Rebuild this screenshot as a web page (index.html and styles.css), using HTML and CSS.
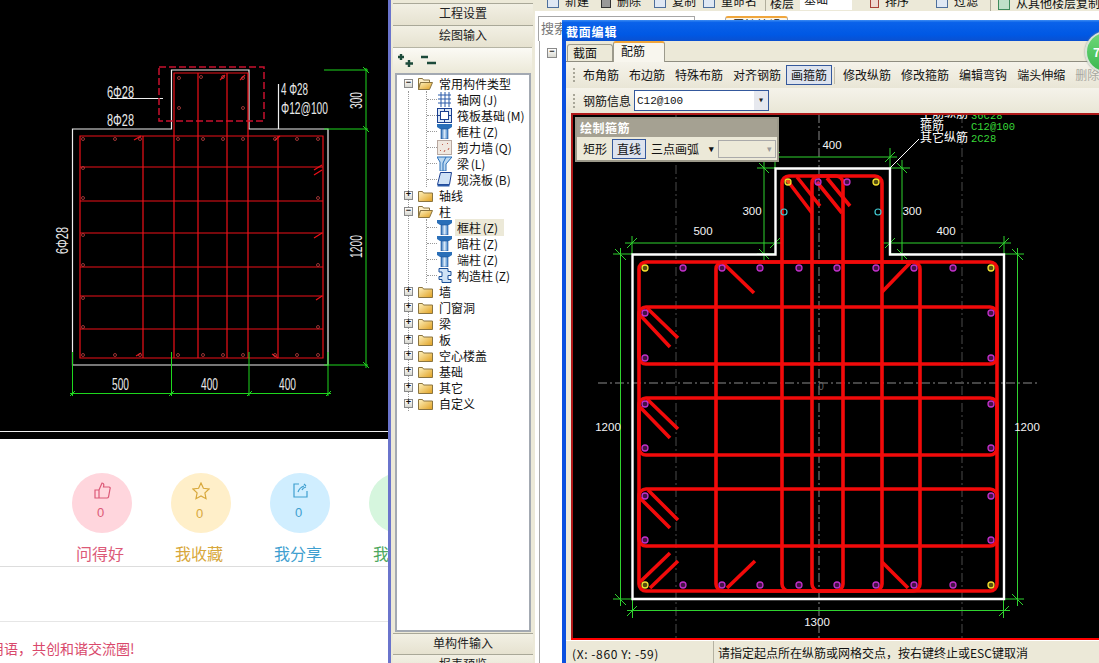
FILE: index.html
```html
<!DOCTYPE html>
<html lang="zh">
<head>
<meta charset="utf-8">
<title>截面编辑</title>
<link rel="stylesheet" href="styles.css">
</head>
<body>
<svg class="defs" width="0" height="0">
  <defs>
    <linearGradient id="fold" x1="0" y1="0" x2="1" y2="1"><stop offset="0" stop-color="#fff3c0"/><stop offset="1" stop-color="#e0a020"/></linearGradient>
    <linearGradient id="col" x1="0" y1="0" x2="1" y2="0"><stop offset="0" stop-color="#2a6fb8"/><stop offset=".5" stop-color="#d8e8f8"/><stop offset="1" stop-color="#3a80c8"/></linearGradient>
    <symbol id="i-closed" viewBox="0 0 15 13"><path d="M.5 2.500h4l1 1.500h9v8.500h-14z" fill="url(#fold)" stroke="#8a7440"/></symbol>
    <symbol id="i-open" viewBox="0 0 15 13"><path d="M.5 1.500h4l1 1.500h6v2.500h-9l-2 7z" fill="#fff0c8" stroke="#8a7440"/><path d="M2.500 5.500h12l-3 7h-11z" fill="url(#fold)" stroke="#8a7440"/></symbol>
    <symbol id="i-grid" viewBox="0 0 15 15"><path d="M1 3h13M1 7h13M1 11h13M4 0v15M8 0v15M12 0v15" stroke="#2a5aa8" fill="none"/></symbol>
    <symbol id="i-raft" viewBox="0 0 15 15"><rect x=".5" y=".5" width="14" height="14" fill="#dbe8f8" stroke="#1a3f90"/><rect x="3.500" y="3.500" width="8" height="8" fill="#fff" stroke="#1a3f90"/><path d="M0 7.500h3M12 7.500h3M7.500 0v3M7.500 12v3" stroke="#1a3f90"/></symbol>
    <symbol id="i-col" viewBox="0 0 15 15"><path d="M0 0h15v3l-3 2h-9l-3-2z" fill="#2a6fb8"/><rect x="4" y="5" width="7" height="10" fill="url(#col)" stroke="#1a4f98" stroke-width=".6"/></symbol>
    <symbol id="i-wall" viewBox="0 0 15 15"><rect x=".5" y=".5" width="14" height="14" fill="#f0e8e0" stroke="#b8a8a0"/><path d="M3 11l1-1M7 12l1-2M11 10l1-2M5 5l1-1M10 4l1-1" stroke="#c06050"/></symbol>
    <symbol id="i-beam" viewBox="0 0 15 15"><path d="M0 1h15L9 8v7H3V6z" fill="#bcd8f0" stroke="#2a6fb8"/><path d="M9 1L6 7v8" stroke="#2a6fb8" fill="none"/></symbol>
    <symbol id="i-slab" viewBox="0 0 15 15"><path d="M3.500 .5h11l-2 12h-12z" fill="#cfe2f6" stroke="#1a3f90"/><path d="M.5 12.500h12v2h-12z" fill="#2a5aa8"/></symbol>
    <symbol id="i-struct" viewBox="0 0 15 15"><path d="M5 .5h6v3h3v4h-3v4h3v3H5v-3H2v-3h3V4H2V.5z" fill="#cfe2f6" stroke="#1a4f98"/></symbol>
  </defs>
</svg>

<div class="page">
  <section class="left">
    <svg class="cad" viewBox="0 0 388 439" width="388" height="439">
      <rect class="cad-bg" x="0" y="0" width="388" height="439"/>
      <g class="cad-white">
        <path d="M72.500 365V129H171.500V70H249V129H328V365Z"/>
        <path d="M110 98.500H163M278.500 84V129"/>
        <path d="M0 431.500H388"/>
      </g>
      <rect class="cad-dash" x="159" y="67" width="105" height="54"/>
      <g class="cad-red">
        <path d="M80 136H323V358H80ZM174 73H248V358H174Z"/>
        <path d="M198 73V358M227 73V358M143 136V358M278 136V358"/>
        <path d="M80 167H323M80 201H323M80 233H323M80 267H323M80 296H323M80 329H323"/>
        <path d="M134 140L141 136M275 140L280 136M220 80L225 75M240 80L245 75M314 170L322 165M314 175L322 170M314 238L322 233M316 300L322 296M136 356L141 353M272 354L278 358"/>
      </g>
      <g class="cad-dots">
        <circle cx="83" cy="139" r="1.500"/><circle cx="115" cy="139" r="1.500"/><circle cx="140" cy="139" r="1.500"/><circle cx="178" cy="139" r="1.500"/><circle cx="203" cy="139" r="1.500"/><circle cx="223" cy="139" r="1.500"/><circle cx="243" cy="139" r="1.500"/><circle cx="275" cy="139" r="1.500"/><circle cx="297" cy="139" r="1.500"/><circle cx="318" cy="139" r="1.500"/>
        <circle cx="83" cy="355" r="1.500"/><circle cx="115" cy="355" r="1.500"/><circle cx="140" cy="355" r="1.500"/><circle cx="178" cy="355" r="1.500"/><circle cx="203" cy="355" r="1.500"/><circle cx="223" cy="355" r="1.500"/><circle cx="243" cy="355" r="1.500"/><circle cx="275" cy="355" r="1.500"/><circle cx="297" cy="355" r="1.500"/><circle cx="318" cy="355" r="1.500"/>
        <circle cx="83" cy="168" r="1.500"/><circle cx="83" cy="198" r="1.500"/><circle cx="83" cy="235" r="1.500"/><circle cx="83" cy="265" r="1.500"/><circle cx="83" cy="298" r="1.500"/><circle cx="83" cy="327" r="1.500"/>
        <circle cx="318" cy="198" r="1.500"/><circle cx="318" cy="265" r="1.500"/><circle cx="318" cy="327" r="1.500"/>
        <circle cx="179" cy="78" r="1.500"/><circle cx="201" cy="77" r="1.500"/><circle cx="223" cy="77" r="1.500"/><circle cx="243" cy="78" r="1.500"/><circle cx="179" cy="108" r="1.500"/><circle cx="243" cy="108" r="1.500"/>
      </g>
      <g class="cad-green">
        <path d="M72.500 352V396M171.500 352V396M249 352V396M328 352V396M70 393.500H331"/>
        <path d="M70 396L75 391M169 396L174 391M247 396L252 391M326 396L331 391"/>
        <path d="M366 68V368M324 70H368M324 129H368M324 365H368"/>
        <path d="M363 67L369 73M363 126L369 132M363 362L369 368"/>
      </g>
      <g class="cad-text">
        <text x="107" y="98" textLength="27" lengthAdjust="spacingAndGlyphs">6Φ28</text>
        <text x="107" y="126" textLength="27" lengthAdjust="spacingAndGlyphs">8Φ28</text>
        <text x="281" y="95" textLength="27" lengthAdjust="spacingAndGlyphs">4 Φ28</text>
        <text x="281" y="114" textLength="47" lengthAdjust="spacingAndGlyphs">Φ12@100</text>
        <text x="112" y="390" textLength="17" lengthAdjust="spacingAndGlyphs">500</text>
        <text x="201" y="390" textLength="17" lengthAdjust="spacingAndGlyphs">400</text>
        <text x="279" y="390" textLength="17" lengthAdjust="spacingAndGlyphs">400</text>
        <text transform="translate(362 109) rotate(-90)" textLength="17" lengthAdjust="spacingAndGlyphs">300</text>
        <text transform="translate(362 258) rotate(-90)" textLength="23" lengthAdjust="spacingAndGlyphs">1200</text>
        <text transform="translate(68 254) rotate(-90)" textLength="27" lengthAdjust="spacingAndGlyphs">6Φ28</text>
      </g>
    </svg>

    <div class="actions">
      <div class="action pink">
        <div class="bubble">
          <svg width="17" height="17" viewBox="0 0 17 17"><path d="M1 8h4v8H1zM5 8l3-7c2 0 2 2 1.500 4H15c1 0 1.500 1 1 2l-1.500 8c-.2.700-.7 1-1.500 1H5"/></svg>
          <span class="count">0</span>
        </div>
        <span class="label">问得好</span>
      </div>
      <div class="action amber">
        <div class="bubble">
          <svg width="18" height="18" viewBox="0 0 18 18"><path d="M9 1l2.400 5.300 5.600.7-4.100 3.900 1.100 5.800L9 14l-5 2.700 1.100-5.800L1 7l5.600-.7z"/></svg>
          <span class="count">0</span>
        </div>
        <span class="label">我收藏</span>
      </div>
      <div class="action sky">
        <div class="bubble">
          <svg width="17" height="17" viewBox="0 0 17 17"><path d="M7 2H2v13h13V9M6 10c1-3 3-5 6-6M10 8c.5-1.500 2-2.500 4-3M12 2l2 2"/></svg>
          <span class="count">0</span>
        </div>
        <span class="label">我分享</span>
      </div>
      <div class="action mint">
        <div class="bubble"></div>
        <span class="label">我参与</span>
      </div>
    </div>
    <div class="spacer"></div>
    <p class="notice">用语，共创和谐交流圈!</p>
  </section>

  <div class="edge"></div>

  <aside class="sidebar">
    <div class="nav-btn">工程设置</div>
    <div class="nav-btn">绘图输入</div>
    <div class="tree-tools">
      <svg width="18" height="16" viewBox="0 0 18 16"><path class="plus" d="M3 1v6M0 4h6M11 7v7M7.500 10.500H15"/></svg>
      <svg width="18" height="16" viewBox="0 0 18 16"><path class="plus" d="M0 4h7M6 10h9"/></svg>
    </div>
    <div class="tree">
      <div class="row"><i class="tw">−</i><svg class="fold"><use href="#i-open"/></svg><span>常用构件类型</span></div>
      <div class="children">
        <div class="row leaf"><svg class="ico"><use href="#i-grid"/></svg><span>轴网 (J)</span></div>
        <div class="row leaf"><svg class="ico"><use href="#i-raft"/></svg><span>筏板基础 (M)</span></div>
        <div class="row leaf"><svg class="ico"><use href="#i-col"/></svg><span>框柱 (Z)</span></div>
        <div class="row leaf"><svg class="ico"><use href="#i-wall"/></svg><span>剪力墙 (Q)</span></div>
        <div class="row leaf"><svg class="ico"><use href="#i-beam"/></svg><span>梁 (L)</span></div>
        <div class="row leaf"><svg class="ico"><use href="#i-slab"/></svg><span>现浇板 (B)</span></div>
      </div>
      <div class="row"><i class="tw">+</i><svg class="fold"><use href="#i-closed"/></svg><span>轴线</span></div>
      <div class="row"><i class="tw">−</i><svg class="fold"><use href="#i-open"/></svg><span>柱</span></div>
      <div class="children">
        <div class="row leaf"><svg class="ico"><use href="#i-col"/></svg><span class="current">框柱 (Z)</span></div>
        <div class="row leaf"><svg class="ico"><use href="#i-col"/></svg><span>暗柱 (Z)</span></div>
        <div class="row leaf"><svg class="ico"><use href="#i-col"/></svg><span>端柱 (Z)</span></div>
        <div class="row leaf"><svg class="ico"><use href="#i-struct"/></svg><span>构造柱 (Z)</span></div>
      </div>
      <div class="row"><i class="tw">+</i><svg class="fold"><use href="#i-closed"/></svg><span>墙</span></div>
      <div class="row"><i class="tw">+</i><svg class="fold"><use href="#i-closed"/></svg><span>门窗洞</span></div>
      <div class="row"><i class="tw">+</i><svg class="fold"><use href="#i-closed"/></svg><span>梁</span></div>
      <div class="row"><i class="tw">+</i><svg class="fold"><use href="#i-closed"/></svg><span>板</span></div>
      <div class="row"><i class="tw">+</i><svg class="fold"><use href="#i-closed"/></svg><span>空心楼盖</span></div>
      <div class="row"><i class="tw">+</i><svg class="fold"><use href="#i-closed"/></svg><span>基础</span></div>
      <div class="row"><i class="tw">+</i><svg class="fold"><use href="#i-closed"/></svg><span>其它</span></div>
      <div class="row"><i class="tw">+</i><svg class="fold"><use href="#i-closed"/></svg><span>自定义</span></div>
    </div>
    <div class="nav-btn low">单构件输入</div>
    <div class="nav-btn low">报表预览</div>
  </aside>

  <main class="main">
    <div class="topbar">
      <div class="tool t1"><b class="tool-ico"></b>新建</div>
      <div class="tool t2"><b class="tool-ico dark"></b>删除</div>
      <div class="tool t3"><b class="tool-ico"></b>复制</div>
      <div class="tool t4"><b class="tool-ico"></b>重命名</div>
      <div class="tool t5">楼层</div>
      <div class="tool t6"><span class="floor-input">基础</span></div>
      <div class="tool t7"><b class="tool-ico red"></b>排序</div>
      <div class="tool t8"><b class="tool-ico"></b>过滤</div>
      <div class="tool t9"><b class="tool-ico green"></b>从其他楼层复制</div>
    </div>
    <div class="subhead">
      <div class="search">搜索</div>
      <div class="prop-tab">属性编辑</div>
    </div>
    <div class="list-pane"><i class="tw small">−</i></div>

    <div class="dialog">
      <div class="title">截面编辑</div>
      <div class="tabs">
        <div class="tab">截面</div>
        <div class="tab on">配筋</div>
      </div>
      <div class="bar">
        <i class="grip"></i>
        <span class="btn">布角筋</span><span class="btn">布边筋</span><span class="btn">特殊布筋</span><span class="btn">对齐钢筋</span>
        <span class="btn sel">画箍筋</span><i class="vsep"></i>
        <span class="btn">修改纵筋</span><span class="btn">修改箍筋</span><span class="btn">编辑弯钩</span><span class="btn">端头伸缩</span><span class="btn off">删除</span>
      </div>
      <div class="bar second">
        <i class="grip"></i>
        <span class="field-label">钢筋信息</span>
        <div class="select"><span>C12@100</span><b class="drop">▾</b></div>
      </div>
      <div class="stage">
        <svg class="draw" viewBox="571 113 528 527" width="528" height="527">
          <rect class="cad-bg" x="571" y="113" width="528" height="527"/>
          <g class="axis">
            <path class="major" d="M598 383H1037M819 114V640"/>
            <path d="M676 114V640M962 114V640"/>
          </g>
          <g class="dim">
            <path d="M770 157H897M890 148V168M775 150V168"/>
            <path d="M764 160V262M757 168H775M757 254H775"/>
            <path d="M902 160V262M890 168H910M890 254H910"/>
            <path d="M625 243H782M632 236V254M883 243H1011M1004 236V254"/>
            <path d="M620.500 248V606M613 254H632M613 599H632"/>
            <path d="M1017.500 248V606M1004 254H1024M1004 599H1024"/>
            <path d="M627 610.500H1010M632.500 599V618M1003.500 599V618"/>
            <path d="M770 162L780 152M885 162L895 152M759 163L769 173M759 249L769 259M897 163L907 173M897 249L907 259M627 248L637 238M770 248L780 238M885 248L895 238M999 248L1009 238M615 249L626 260M615 594L626 605M1012 249L1023 260M1012 594L1023 605M627 616L637 606M999 616L1009 606"/>
          </g>
          <g class="outline">
            <path d="M632.500 599V254.500H775.500V168.500H890V254.500H1004V599Z"/>
          </g>
          <path class="leader" d="M890 168L919 139"/>
          <g class="rebar">
            <rect x="639" y="262" width="358" height="329" rx="7"/>
            <rect x="639" y="307" width="358" height="57" rx="7"/>
            <rect x="639" y="398" width="358" height="57" rx="7"/>
            <rect x="639" y="489" width="358" height="57" rx="7"/>
            <rect x="716" y="262" width="204" height="329" rx="7"/>
            <rect x="782" y="176" width="100" height="415" rx="7"/>
            <rect x="812" y="176" width="31" height="415" rx="7"/>
            <path d="M787 180L812 213M797 177L820 206M817 182L842 213M827 178L850 206"/>
            <path d="M722 262L754 293M910 263L882 292"/>
            <path d="M647 308L678 338M640 315L670 347M647 399L678 429M640 407L670 438M648 490L678 520M640 498L670 528"/>
            <path d="M640 582L670 553M650 588L678 561M727 588L755 561M882 562L908 588"/>
          </g>
          <g class="bar-p">
            <circle cx="683" cy="268" r="3"/><circle cx="722" cy="268" r="3"/><circle cx="760" cy="268" r="3"/><circle cx="799" cy="268" r="3"/><circle cx="837" cy="268" r="3"/><circle cx="876" cy="268" r="3"/><circle cx="914" cy="268" r="3"/><circle cx="953" cy="268" r="3"/>
            <circle cx="683" cy="585" r="3"/><circle cx="722" cy="585" r="3"/><circle cx="760" cy="585" r="3"/><circle cx="799" cy="585" r="3"/><circle cx="837" cy="585" r="3"/><circle cx="876" cy="585" r="3"/><circle cx="914" cy="585" r="3"/><circle cx="953" cy="585" r="3"/>
            <circle cx="645" cy="313" r="3"/><circle cx="645" cy="358" r="3"/><circle cx="645" cy="404" r="3"/><circle cx="645" cy="448" r="3"/><circle cx="645" cy="496" r="3"/><circle cx="645" cy="540" r="3"/>
            <circle cx="991" cy="313" r="3"/><circle cx="991" cy="358" r="3"/><circle cx="991" cy="404" r="3"/><circle cx="991" cy="448" r="3"/><circle cx="991" cy="496" r="3"/><circle cx="991" cy="540" r="3"/>
            <circle cx="818" cy="182" r="3"/><circle cx="847" cy="182" r="3"/>
          </g>
          <g class="bar-y">
            <circle cx="645" cy="268" r="3"/><circle cx="991" cy="268" r="3"/><circle cx="645" cy="585" r="3"/><circle cx="991" cy="585" r="3"/><circle cx="788" cy="182" r="3"/><circle cx="876" cy="182" r="3"/>
          </g>
          <g class="bar-c">
            <circle cx="784" cy="212" r="3"/><circle cx="878" cy="212" r="3"/>
          </g>
          <g class="num">
            <text x="832" y="149" text-anchor="middle">400</text>
            <text x="752" y="215" text-anchor="middle">300</text>
            <text x="912" y="215" text-anchor="middle">300</text>
            <text x="703" y="235" text-anchor="middle">500</text>
            <text x="946" y="235" text-anchor="middle">400</text>
            <text x="608" y="431" text-anchor="middle">1200</text>
            <text x="1027" y="431" text-anchor="middle">1200</text>
            <text x="817" y="626" text-anchor="middle">1300</text>
          </g>
          <text class="origin" x="821" y="390" text-anchor="middle">0</text>
          <g class="labels">
            <text x="920" y="118">主筋纵筋</text>
            <text x="920" y="130">箍筋</text>
            <text x="920" y="142">其它纵筋</text>
          </g>
          <g class="values">
            <text x="971" y="119">36C28</text>
            <text x="971" y="130">C12@100</text>
            <text x="971" y="142">2C28</text>
          </g>
          <rect class="frame" x="572" y="114" width="530" height="525"/>
          <path class="frame-low" d="M571 639H1099"/>
        </svg>
        <div class="float">
          <div class="float-title">绘制箍筋</div>
          <div class="float-row">
            <span class="fbtn">矩形</span><span class="fbtn sel">直线</span><span class="fbtn">三点画弧</span>
            <b class="fdrop">▾</b>
            <div class="fcombo"><b>▾</b></div>
          </div>
        </div>
      </div>
      <div class="status">
        <span class="coord">(X: -860 Y: -59)</span>
        <span class="msg">请指定起点所在纵筋或网格交点，按右键终止或ESC键取消</span>
      </div>
    </div>
    <div class="badge">70</div>
  </main>
</div>
</body>
</html>
```

FILE: styles.css
```css
* { box-sizing: border-box; }
html, body { margin: 0; padding: 0; background: #fff; }
body { font-family: "Noto Sans CJK SC", "Liberation Sans", sans-serif; font-size: 12px; color: #111; overflow: hidden; }
.defs { position: absolute; }
.page { display: flex; width: 1099px; height: 663px; overflow: hidden; }

/* Left article */
.left { width: 388px; flex: none; height: 663px; overflow: hidden; background: #fff; }
.cad { display: block; }
.cad-bg { fill: #000; }
.cad-white path { fill: none; stroke: #eee; stroke-width: 1.200; }
.cad-dash { fill: none; stroke: #c8102e; stroke-width: 1.500; stroke-dasharray: 7 3; }
.cad-red path { fill: none; stroke: #ee1018; stroke-width: 1.200; }
.cad-dots circle { fill: none; stroke: #c04040; stroke-width: .8; }
.cad-green path { fill: none; stroke: #1ed71e; stroke-width: 1; }
.cad-text text { fill: #e8e8e8; font-family: "Liberation Sans", sans-serif; font-size: 16px; }

.actions { display: flex; gap: 39px; height: 128px; padding: 34px 0 0 72px; border-bottom: 1px solid #ddd; overflow: hidden; }
.action { width: 60px; flex: none; display: flex; flex-direction: column; align-items: center; }
.bubble { width: 60px; height: 60px; border-radius: 50%; display: flex; flex-direction: column; align-items: center; padding-top: 9px; }
.bubble svg { fill: none; stroke-width: 1.200; stroke: currentColor; }
.count { font-family: "Liberation Sans", sans-serif; font-size: 13px; line-height: 16px; margin-top: 6px; margin-right: 3px; }
.label { font-size: 16px; line-height: 22px; margin: 9px 4px 0 0; white-space: nowrap; }
.pink { color: #dc5a78; } .pink .bubble { background: #ffd6dd; }
.amber { color: #d8a83c; } .amber .bubble { background: #ffefc9; }
.sky { color: #3f9fd0; } .sky .bubble { background: #d0eeff; }
.mint { color: #4ea860; } .mint .bubble { background: #d6f6de; }
.spacer { height: 55px; border-bottom: 1px solid #e6e6e6; }
.notice { margin: 16px 0 0; font-size: 14px; line-height: 20px; color: #d9486b; text-indent: -10px; white-space: nowrap; }

.edge { width: 3px; flex: none; background: #6a74cc; }

/* Sidebar */
.sidebar { width: 144px; flex: none; height: 663px; background: #ece9d8; padding: 3px 3px 0 2px; display: flex; flex-direction: column; }
.nav-btn { height: 22px; flex: none; text-align: center; line-height: 18px; background: linear-gradient(#f2f0e4, #e6e2d0); border-top: 1px solid #a9a898; color: #222; margin-right: -1px; }
.nav-btn.low { height: 21px; }
.tree-tools { height: 26px; flex: none; display: flex; gap: 5px; align-items: center; padding-left: 5px; background: linear-gradient(#fbfaf5, #ece9d8); border-top: 1px solid #b5b4a4; }
.plus { fill: none; stroke: #1c4a3a; stroke-width: 2.400; }
.tree { height: 559px; flex: none; margin: 0 0 1px 2px; width: 136px; background: #fff; border: 2px solid #a3a9b2; position: relative; word-spacing: -1px; }
.tree::before { content: ""; position: absolute; left: 11px; top: 16px; height: 320px; border-left: 1px dotted #999; }
.row { display: flex; align-items: center; height: 16px; white-space: nowrap; position: relative; }
.tw { width: 9px; height: 9px; flex: none; margin-left: 7px; border: 1px solid #8a8a8a; background: linear-gradient(#fff, #d8d8d0); font-style: normal; font-size: 9px; line-height: 7px; text-align: center; font-family: "Liberation Mono", monospace; font-weight: bold; position: relative; z-index: 1; }
.fold { width: 15px; height: 13px; flex: none; margin: 0 6px 0 5px; }
.children { margin-left: 29px; border-left: 1px dotted #999; }
.leaf { padding-left: 10px; }
.leaf::before { content: ""; position: absolute; left: 0; top: 8px; width: 10px; border-top: 1px dotted #999; }
.ico { width: 15px; height: 15px; flex: none; margin-right: 5px; }
.current { background: #ece9d8; margin-left: -2px; padding: 0 6px 0 2px; }

/* Main */
.main { position: relative; flex: 1; min-width: 0; height: 663px; background: #fff; }
.topbar { display: flex; height: 11px; overflow: hidden; background: #ece9d8; padding-left: 12px; align-items: flex-start; }
.tool { flex: none; display: flex; align-items: center; gap: 6px; height: 14px; margin-top: -6px; white-space: nowrap; line-height: 14px; }
.t1 { width: 54px; } .t2 { width: 53px; } .t3 { width: 49px; } .t4 { width: 62px; }
.t5 { width: 35px; border-left: 1px solid #b0ad9c; padding-left: 4px; height: 18px; }
.t6 { width: 70px; } .t7 { width: 66px; } .t8 { width: 54px; } .t9 { width: 120px; border-left: 1px solid #b0ad9c; padding-left: 7px; height: 18px; }
.tool-ico { width: 12px; height: 13px; display: block; flex: none; border: 1px solid #4d6f9c; background: #dfe8f4; }
.tool-ico.dark { border-color: #333; background: #999; width: 10px; }
.tool-ico.red { border-color: #a84038; background: #eed8d0; width: 9px; }
.tool-ico.green { border-color: #3f8a5c; background: #bfe0c8; }
.floor-input { display: block; width: 52px; height: 18px; background: #fff; padding-left: 4px; }
.subhead { display: flex; height: 29px; background: #fff; padding-top: 5px; position: relative; }
.search { width: 157px; height: 25px; margin-left: 3px; border: 1px solid #a6a6a6; border-bottom: 0; background: #fff; color: #777; font-size: 13px; line-height: 22px; padding-left: 2px; }
.prop-tab { margin-left: 30px; width: 63px; height: 16px; border: 1px solid #aaa; border-top: 2px solid #f0a63c; border-radius: 3px 3px 0 0; text-align: center; line-height: 13px; background: #f8f6ee; }
.list-pane { margin-left: 4px; height: 623px; border-top: 1px solid #aaa; border-left: 1px solid #aaa; padding-top: 7px; }
.tw.small { display: block; margin-left: 7px; width: 10px; height: 10px; }

/* Dialog */
.dialog { position: absolute; left: 27px; top: 20px; width: 545px; height: 643px; background: #ece9d8; border-left: 4px solid #0a50e0; display: flex; flex-direction: column; }
.title { height: 21px; flex: none; margin-left: -4px; padding-left: 4px; background: linear-gradient(#3c8cf2 0, #0a62ea 12%, #0058e4 70%, #0a50d0 100%); color: #fff; font-weight: 700; font-size: 12px; line-height: 23px; letter-spacing: .8px; }
.tabs { height: 21px; flex: none; display: flex; align-items: flex-end; padding-left: 1px; border-bottom: 1px solid #8f8d80; }
.tab { width: 46px; height: 17px; border: 1px solid #9c9a8c; border-bottom: 0; border-radius: 3px 3px 0 0; padding-left: 5px; line-height: 16px; font-size: 12px; background: #ece9d8; }
.tab.on { width: 52px; height: 21px; border-top: 2px solid #f0a63c; background: #f8f6ee; line-height: 16px; margin-bottom: -1px; padding-left: 7px; }
.bar { height: 26px; flex: none; display: flex; align-items: center; padding-left: 7px; background: linear-gradient(#f5f3ea, #e9e6d6); white-space: nowrap; }
.bar.second { height: 25px; }
.grip { width: 3px; height: 14px; flex: none; margin-right: 2px; border-left: 2px dotted #a8a698; }
.btn { height: 20px; padding: 0 5px; line-height: 18px; border: 1px solid transparent; border-width: 1px 0; flex: none; }
.btn.sel { background: #dde3ee; border: 1px solid #34589c; padding: 0 4px; }
.btn.off { color: #a8a8a0; }
.vsep { width: 1px; height: 17px; background: #c0bdab; margin: 0 3px 0 2px; flex: none; }
.field-label { margin-left: 5px; margin-right: 3px; }
.select { width: 135px; height: 21px; border: 1px solid #34589c; background: #fff; display: flex; align-items: center; justify-content: space-between; padding-left: 2px; font-family: "Liberation Mono", monospace; font-size: 11px; }
.drop { width: 14px; height: 19px; background: #e6e8ee; text-align: center; line-height: 19px; font-weight: 400; font-size: 10px; color: #222; }
.stage { position: relative; height: 527px; flex: none; margin-left: 5px; overflow: hidden; }
.draw { display: block; }
.axis path { fill: none; stroke: #4a4a4a; stroke-width: 1; stroke-dasharray: 9 3 2 3; }
.axis .major { stroke: #8a8a8a; }
.dim path { fill: none; stroke: #2fd32f; stroke-width: 1; }
.outline path { fill: none; stroke: #fff; stroke-width: 2.400; }
.leader { fill: none; stroke: #fff; stroke-width: 1; }
.rebar rect, .rebar path { fill: none; stroke: #f20a0a; stroke-width: 3.600; }
.bar-p circle { fill: rgba(192, 48, 200, .35); stroke: #c030c8; stroke-width: 1.300; }
.bar-y circle { fill: rgba(242, 224, 48, .35); stroke: #f2e030; stroke-width: 1.300; }
.bar-c circle { fill: none; stroke: #40c8d0; stroke-width: 1.200; }
.num text { fill: #f4f4f4; font-family: "Liberation Sans", sans-serif; font-size: 11.500px; }
.origin { fill: #666; font-family: "Liberation Sans", sans-serif; font-size: 10px; }
.labels text { fill: #fff; font-size: 12px; }
.values text { fill: #38d838; font-family: "Liberation Mono", monospace; font-size: 10.500px; }
.frame { fill: none; stroke: #b01a1a; stroke-width: 2; }
.frame-low { fill: none; stroke: #f00; stroke-width: 2; }

.float { position: absolute; left: 4px; top: 4px; width: 204px; height: 45px; border: 2px solid #9c998a; background: #ece9d8; }
.float-title { height: 18px; background: #a5a192; color: #fff; font-weight: 700; line-height: 17px; padding-left: 3px; letter-spacing: .5px; }
.float-row { display: flex; align-items: center; height: 23px; padding-left: 1px; background: #ece9d8; }
.fbtn { padding: 0 4px; height: 20px; line-height: 18px; border: 1px solid transparent; flex: none; }
.fbtn.sel { background: #dde3ee; border-color: #34589c; }
.fdrop { width: 14px; text-align: center; font-size: 9px; flex: none; }
.fcombo { width: 58px; height: 18px; background: #ece9d8; border: 1px solid #aaa; margin-left: 0; text-align: right; padding-right: 3px; font-size: 9px; line-height: 16px; color: #999; flex: none; }
.fcombo b { font-weight: 400; }

.status { height: 23px; flex: none; display: flex; align-items: flex-end; background: #ece9d8; border-top: 1px solid #fff; white-space: nowrap; }
.coord { width: 148px; padding-left: 6px; flex: none; height: 100%; line-height: 26px; letter-spacing: .6px; border-right: 1px solid #b5b2a2; }
.msg { padding-left: 4px; line-height: 21px; }

.badge { position: absolute; left: 550px; top: 31px; width: 42px; height: 42px; border-radius: 50%; background: linear-gradient(#6fd878, #3ab850); border: 2px solid #d8e4d8; color: #fff; font-weight: 700; font-size: 12px; line-height: 38px; padding-left: 6px; box-shadow: 0 0 2px #888; }
```
